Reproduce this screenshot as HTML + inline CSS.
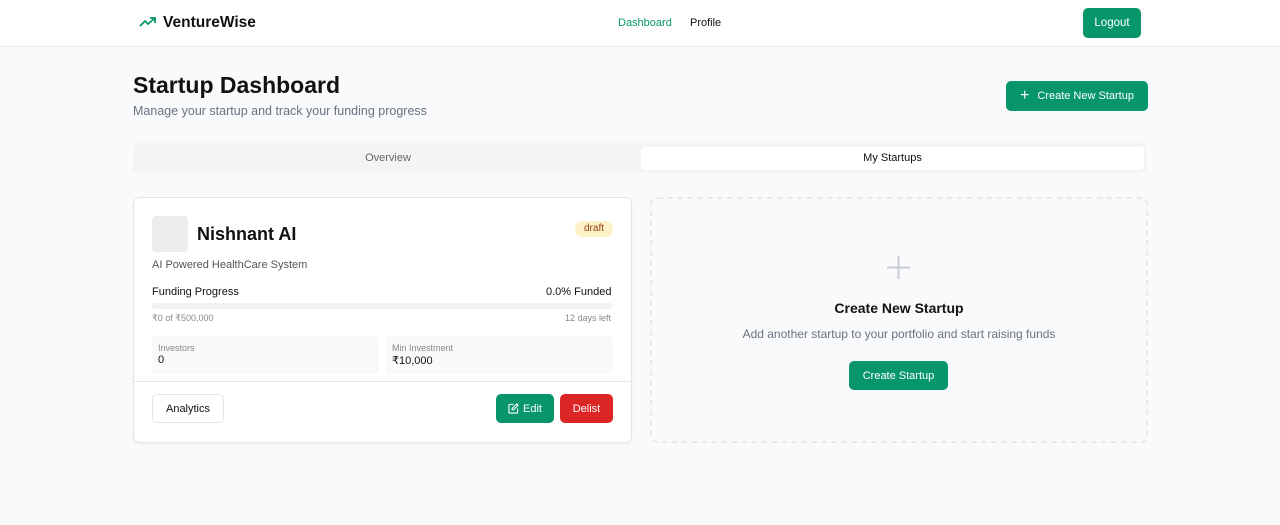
<!DOCTYPE html>
<html><head><style>
*{box-sizing:border-box;margin:0;padding:0}
body{width:1280px;height:525px;background:#f9fafb;font-family:"Liberation Sans",sans-serif;color:#111;position:relative;overflow:hidden}
.abs{position:absolute}
.nav{position:absolute;left:0;top:0;width:1280px;height:47px;background:#fff;border-bottom:1px solid #e8e8e8}
.btn{position:absolute;border-radius:5px;color:#fff;font-size:12px;display:flex;align-items:center;justify-content:center}
.g{background:#079669}
</style></head><body>
<div class="nav">
 <svg class="abs" style="left:139px;top:15px" width="18" height="14" viewBox="0 0 18 14" fill="none" stroke="#079669" stroke-width="1.8"><path d="M1 11 L6 6 L9 9 L16 3 M11 3 H16 V8"/></svg>
 <div class="abs" style="left:163px;top:14px;font-size:15.5px;font-weight:bold">VentureWise</div>
 <div class="abs" style="left:618px;top:17px;font-size:11px;color:#079669">Dashboard</div>
 <div class="abs" style="left:690px;top:17px;font-size:11px">Profile</div>
 <div class="btn g" style="left:1083px;top:8px;width:58px;height:30px;font-size:11.5px">Logout</div>
</div>
<div class="abs" style="left:133px;top:72px;font-size:23px;font-weight:bold">Startup Dashboard</div>
<div class="abs" style="left:133px;top:104px;font-size:12.5px;color:#6b7280">Manage your startup and track your funding progress</div>
<div class="btn g" style="left:1006px;top:81px;width:142px;height:30px;font-size:11px"><span style="font-size:16px;margin-right:8px">+</span>Create New Startup</div>
<div class="abs" style="left:133px;top:143px;width:1014px;height:30px;background:#f3f4f5;border-radius:5px"></div>
<div class="abs" style="left:133px;top:152px;width:510px;text-align:center;font-size:11px;color:#666">Overview</div>
<div class="abs" style="left:641px;top:147px;width:503px;height:23px;background:#fff;border-radius:4px;text-align:center;font-size:11px;line-height:23px">My Startups</div>

<div class="abs" style="left:133px;top:197px;width:499px;height:246px;background:#fff;border:1px solid #e3e5e8;border-radius:7px;box-shadow:0 1px 2px rgba(0,0,0,.05)"></div>
<div class="abs" style="left:152px;top:216px;width:36px;height:36px;background:#ececec;border-radius:4px"></div>
<div class="abs" style="left:197px;top:224px;font-size:18px;font-weight:bold">Nishnant AI</div>
<div class="abs" style="left:575px;top:221px;width:38px;height:16px;background:#fdf1c7;border-radius:8px;font-size:10px;color:#92400e;text-align:center;line-height:16px">draft</div>
<div class="abs" style="left:152px;top:259px;font-size:11px;color:#555">AI Powered HealthCare System</div>
<div class="abs" style="left:152px;top:286px;font-size:11px">Funding Progress</div>
<div class="abs" style="left:546px;top:286px;font-size:11px">0.0% Funded</div>
<div class="abs" style="left:152px;top:303px;width:461px;height:6px;background:#f0f1f3;border-radius:3px"></div>
<div class="abs" style="left:152px;top:313px;font-size:9px;color:#888">₹0 of ₹500,000</div>
<div class="abs" style="left:565px;top:313px;font-size:9px;color:#888">12 days left</div>
<div class="abs" style="left:152px;top:336px;width:227px;height:38px;background:#f8f9fa;border-radius:4px"></div>
<div class="abs" style="left:386px;top:336px;width:227px;height:38px;background:#f8f9fa;border-radius:4px"></div>
<div class="abs" style="left:158px;top:343px;font-size:9px;color:#888">Investors</div>
<div class="abs" style="left:158px;top:354px;font-size:11px">0</div>
<div class="abs" style="left:392px;top:343px;font-size:9px;color:#888">Min Investment</div>
<div class="abs" style="left:392px;top:354px;font-size:11px">₹10,000</div>
<div class="abs" style="left:134px;top:381px;width:497px;height:1px;background:#e5e7eb"></div>
<div class="abs" style="left:152px;top:394px;width:72px;height:29px;border:1px solid #e3e5e8;border-radius:5px;font-size:11px;text-align:center;line-height:28px">Analytics</div>
<div class="btn g" style="left:496px;top:394px;width:58px;height:29px;font-size:11px"><svg width="11" height="11" viewBox="0 0 12 12" fill="none" stroke="#fff" stroke-width="1.2" style="margin-right:4px"><path d="M6 1.5H2a1 1 0 0 0-1 1v7.5a1 1 0 0 0 1 1h7.5a1 1 0 0 0 1-1V6"/><path d="M9.5 1 L11 2.5 L6 7.5 H4.5 V6 Z"/></svg>Edit</div>
<div class="btn" style="left:560px;top:394px;width:53px;height:29px;background:#dc2626;font-size:11px">Delist</div>

<div class="abs" style="left:650px;top:197px;width:498px;height:246px;border:2px dashed #e8eaed;border-radius:7px"></div>
<svg class="abs" style="left:886px;top:255px" width="25" height="25" viewBox="0 0 25 25" stroke="#c9ccd1" stroke-width="2"><path d="M12.5 1V24M1 12.5H24"/></svg>
<div class="abs" style="left:650px;top:300px;width:498px;text-align:center;font-size:14px;font-weight:bold">Create New Startup</div>
<div class="abs" style="left:650px;top:327px;width:498px;text-align:center;font-size:12px;color:#6b7280">Add another startup to your portfolio and start raising funds</div>
<div class="btn g" style="left:849px;top:361px;width:99px;height:29px;font-size:11px">Create Startup</div>
</body></html>
